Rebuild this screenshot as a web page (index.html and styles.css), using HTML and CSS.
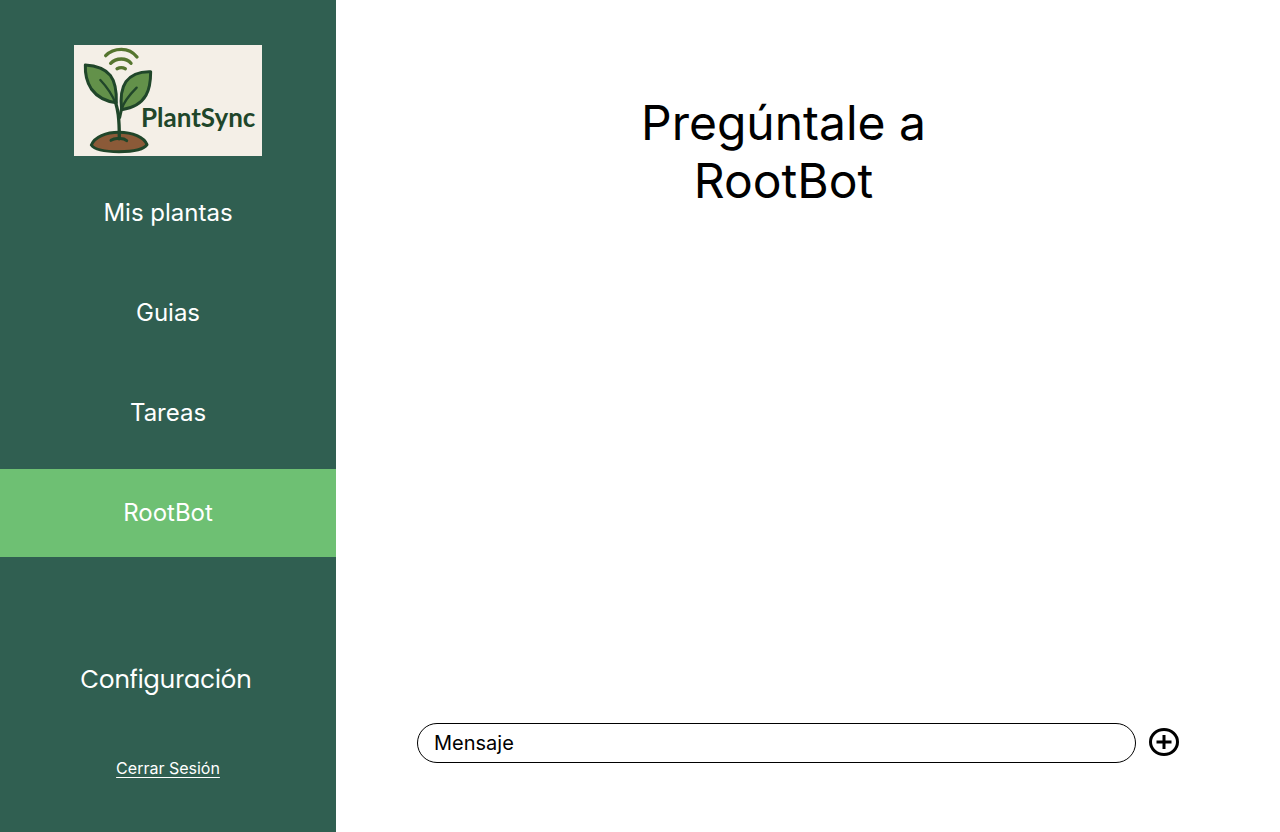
FILE: index.html
```html
<!DOCTYPE html>
<html lang="es">
<head>
<meta charset="utf-8">
<meta name="viewport" content="width=device-width, initial-scale=1">
<title>PlantSync – RootBot</title>
<link rel="stylesheet" href="styles.css">
</head>
<body>
<div class="app">
  <aside class="sidebar">
    <svg class="logo" viewBox="0 0 188 111" role="img" aria-label="PlantSync">
      <rect width="188" height="111" fill="#f4efe7"/>
      <g transform="translate(-4 -5) scale(.3333)" stroke-linecap="round" stroke-linejoin="round">
        <g fill="none" stroke="#55752f" stroke-width="10">
          <path d="M107 47Q125 28 154 28Q183 28 201 51"/>
          <path d="M122 70Q134 57 154 57Q173 57 183 70"/>
          <path d="M141 86Q154 80 166 86"/>
        </g>
        <path d="M64 315C74 291 108 277 147 277C188 277 222 292 231 314C222 328 189 335 147 335C106 335 73 328 64 315Z" fill="#8b5a38" stroke="#20462a" stroke-width="9"/>
        <path d="M46 75C77 77 104 85 121 106C137 127 140 155 139 188C113 185 83 173 64 147C49 124 45 99 46 75Z" fill="#63914a" stroke="#20462a" stroke-width="9"/>
        <path d="M242 95C210 94 184 103 168 125C153 146 151 174 155 209C184 205 213 192 228 166C239 146 242 120 242 95Z" fill="#63914a" stroke="#20462a" stroke-width="9"/>
        <g fill="none" stroke="#20462a" stroke-width="7">
          <path d="M91 120C110 140 126 163 137 190"/>
          <path d="M200 143C181 162 161 186 155 208"/>
          <path d="M137 188C143 209 148 228 148 296" stroke-width="10"/>
          <path d="M155 205L149 232" stroke-width="9"/>
          <path d="M123 301Q134 294 147 296Q162 295 170 302" stroke-width="9"/>
        </g>
      </g>
      <text class="logo-text" x="67" y="82">PlantSync</text>
    </svg>
    <nav class="menu" aria-label="Principal">
      <a class="menu-item" href="#plantas">Mis plantas</a>
      <a class="menu-item" href="#guias">Guias</a>
      <a class="menu-item" href="#tareas">Tareas</a>
      <a class="menu-item active" href="#rootbot" aria-current="page">RootBot</a>
    </nav>
    <div class="account">
      <a class="settings" href="#configuracion">Configuración</a>
      <a class="logout" href="#salir">Cerrar Sesión</a>
    </div>
  </aside>
  <main class="chat">
    <h1 class="title">Pregúntale a RootBot</h1>
    <form class="composer">
      <input class="message" type="text" placeholder="Mensaje" aria-label="Mensaje">
      <button class="add" type="button" aria-label="Añadir">
        <svg viewBox="0 0 32 30" width="32" height="30" fill="none" stroke="#000" stroke-width="3">
          <ellipse cx="16" cy="15" rx="13.5" ry="12.5"/>
          <path d="M8.500 15H23.500M16 8V22"/>
        </svg>
      </button>
    </form>
  </main>
</div>
</body>
</html>
```
FILE: styles.css
```css
* {
  box-sizing: border-box;
}

body {
  margin: 0;
  background: #fff;
  color: #000;
  font-family: Inter, "Liberation Sans", sans-serif;
}

.app {
  display: flex;
  min-height: 100vh;
}

.sidebar {
  display: flex;
  flex: 0 0 336px;
  flex-direction: column;
  align-items: center;
  padding: 45px 0 54px;
  background: #305f51;
}

.sidebar a {
  color: #fff;
}

.logo {
  display: block;
  width: 188px;
}

.logo-text {
  fill: #20462a;
  font-family: Lato, sans-serif;
  font-size: 26px;
  font-weight: 700;
}

.menu {
  display: flex;
  flex-direction: column;
  align-self: stretch;
  gap: 12px;
  margin-top: 13px;
}

.menu-item {
  padding: 29px 16px;
  font-size: 24px;
  line-height: 30px;
  min-height: 88px;
  text-align: center;
  text-decoration: none;
}

.menu-item.active {
  background: #6ec073;
}

.account {
  display: flex;
  flex-direction: column;
  align-items: center;
  gap: 60px;
  margin-top: auto;
}

.settings {
  margin-right: 4px;
  font-family: Poppins, Inter, sans-serif;
  font-size: 24px;
  line-height: 36px;
  text-decoration: none;
}

.logout {
  font-size: 16px;
  line-height: 20px;
  text-underline-offset: 3px;
}

.chat {
  display: flex;
  flex: 1;
  flex-direction: column;
  justify-content: space-between;
  padding: 94px 100px 69px 81px;
}

.title {
  align-self: center;
  max-width: 320px;
  margin: 0 30px 0 0;
  font-size: 48px;
  font-weight: 400;
  line-height: 58px;
  text-align: center;
}

.composer {
  display: flex;
  align-items: center;
  gap: 12px;
}

.message {
  flex: 1;
  min-width: 0;
  height: 40px;
  padding: 0 16px;
  border: 1px solid #000;
  border-radius: 20px;
  background: #fff;
  color: #000;
  font-family: inherit;
  font-size: 20px;
}

.message::placeholder {
  color: #000;
  opacity: 1;
}

.add {
  display: flex;
  padding: 0 0 2px;
  border: 0;
  background: none;
  cursor: pointer;
}
```
